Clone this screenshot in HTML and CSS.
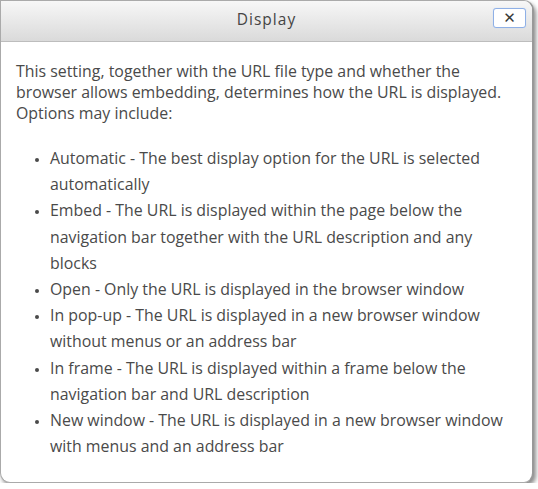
FILE: index.html
```html
<!DOCTYPE html>
<html lang="en">

<head>
    <meta charset="UTF-8">
    <meta name="viewport" content="width=device-width, initial-scale=1.0">
    <title>Display</title>
    <link rel="stylesheet" href="styles.css">
</head>

<body>
    <div class="dialog">
        <div class="hd">
            <span></span>
            <h3 class="title">Display</h3>
            <button class="close" type="button">&#x2715;</button>
        </div>
        <div class="bd">
            <p>This setting, together with the URL file type and whether the browser allows embedding, determines how the URL is displayed. Options may include:</p>
            <ul class="opts">
                <li>Automatic - The best display option for the URL is selected automatically</li>
                <li>Embed - The URL is displayed within the page below the navigation bar together with the URL description and any blocks</li>
                <li>Open - Only the URL is displayed in the browser window</li>
                <li>In pop-up - The URL is displayed in a new browser window without menus or an address bar</li>
                <li>In frame - The URL is displayed within a frame below the navigation bar and URL description</li>
                <li>New window - The URL is displayed in a new browser window with menus and an address bar</li>
            </ul>
        </div>
    </div>
</body>

</html>
```

FILE: styles.css
```css
* {
    margin: 0;
    padding: 0;
    box-sizing: border-box;
}

body {
    background-color: #fff;
    font-family: "Open Sans", "DejaVu Sans", sans-serif;
    color: #4a4a4a;
}

.dialog {
    width: 534px;
    height: 483px;
    border: 1px solid #aaa;
    border-right: 2px solid #999;
    border-radius: 0 10px 10px 10px;
    background-color: #fff;
    box-shadow: 2px 3px 4px rgba(0, 0, 0, .45);
    overflow: hidden;
}

.hd {
    display: grid;
    grid-template-columns: 1fr auto 1fr;
    align-items: center;
    height: 41px;
    background: linear-gradient(#f7f7f7, #dadada);
    border-bottom: 1px solid #bdbdbd;
}

.title {
    font-size: 15.5px;
    font-weight: normal;
    letter-spacing: 1px;
    color: #444;
    padding-bottom: 4px;
}

.close {
    justify-self: end;
    align-self: start;
    margin: 7px 6px 0 0;
    width: 33px;
    height: 20px;
    border: 1px solid #8fb0e6;
    border-radius: 3px;
    background-color: #fff;
    box-shadow: 0 0 1px #b9cff2;
    color: #3a3a3a;
    font-family: "DejaVu Sans", sans-serif;
    font-size: 15px;
    font-weight: bold;
    line-height: 17px;
}

.bd {
    padding: 19px 24px 0 15px;
    font-size: 15.9px;
}

.bd p {
    line-height: 21px;
}

.opts {
    margin-top: 21px;
    padding-left: 34px;
    list-style: disc;
}

.opts li {
    line-height: 26.2px;
}

.opts li::marker {
    font-size: 12px;
}
```
